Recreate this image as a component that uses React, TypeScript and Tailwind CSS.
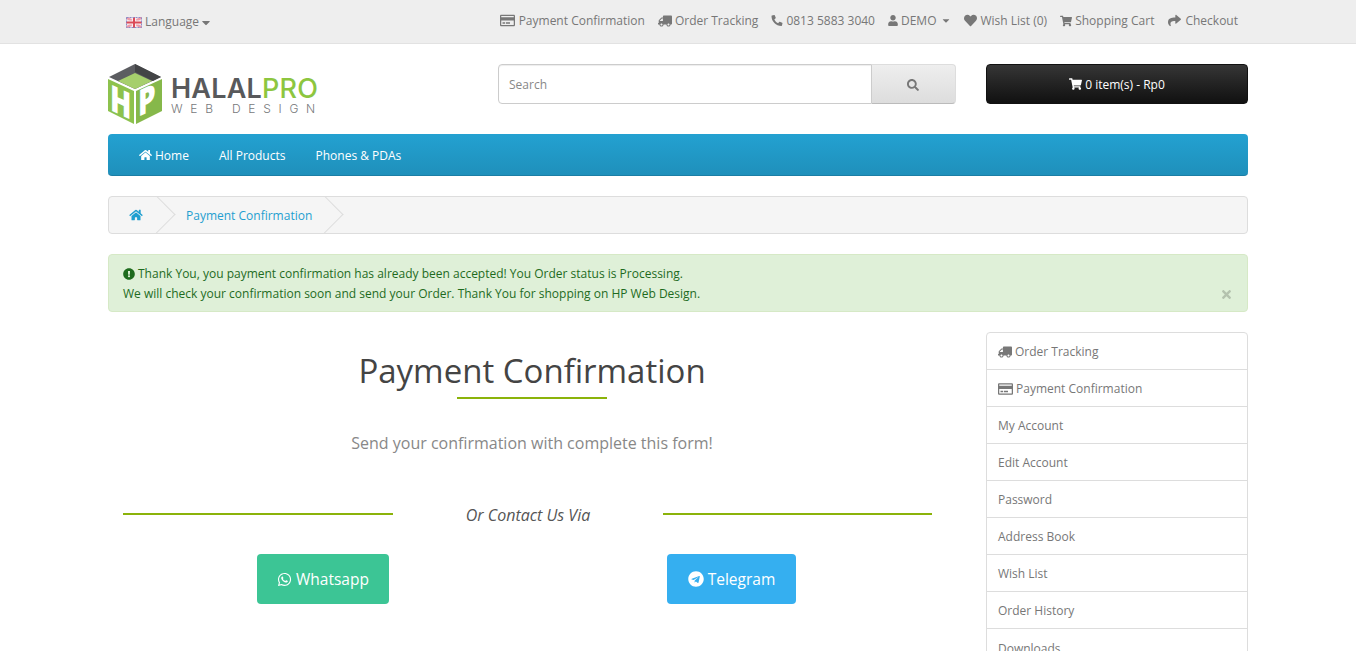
import {
  FaCaretDown,
  FaExclamationCircle,
  FaHeart,
  FaHome,
  FaPhoneAlt,
  FaRegCreditCard,
  FaSearch,
  FaShare,
  FaShoppingCart,
  FaTelegram,
  FaTimes,
  FaTruck,
  FaUser,
  FaWhatsapp,
} from "react-icons/fa";

const sidebarItems = [
  "Order Tracking",
  "Payment Confirmation",
  "My Account",
  "Edit Account",
  "Password",
  "Address Book",
  "Wish List",
  "Order History",
  "Downloads",
];

function Flag() {
  return (
    <svg width="16" height="11" viewBox="0 0 16 11" className="mr-[3px]">
      <rect width="16" height="11" fill="#f0dfe6" />
      <path d="M0 0L16 11M16 0L0 11" stroke="#ee9aa8" strokeWidth="2.5" />
      <path d="M8 0V11M0 5.5H16" stroke="#f8eef0" strokeWidth="4" />
      <path d="M8 0V11M0 5.5H16" stroke="#dc4a58" strokeWidth="2" />
      <rect x="0.5" y="0.5" width="15" height="10" fill="none" stroke="#8a8cc8" strokeDasharray="2 1" />
    </svg>
  );
}

function Logo() {
  return (
    <div className="flex items-center">
      <svg width="54" height="60" viewBox="0 0 54 60">
        <polygon points="27,0 53,13 27,25 1,13" fill="#5c5d61" />
        <polygon points="27,0 53,13 45,17 27,8" fill="#434446" />
        <polygon points="27,9 44,17 27,25 10,17" fill="#a6cf6c" />
        <polygon points="0,15 26,27 26,60 0,47" fill="#8dc24d" />
        <polygon points="54,15 28,27 28,60 54,47" fill="#86b84a" />
        <g transform="translate(2,46) skewY(25) scale(1,1.3)">
          <text fontSize="28" fontWeight="800" fill="#fff" fontFamily="Open Sans">
            H
          </text>
        </g>
        <g transform="translate(30,53) skewY(-25) scale(1,1.3)">
          <text fontSize="28" fontWeight="800" fill="#fff" fontFamily="Open Sans">
            P
          </text>
        </g>
      </svg>
      <div className="ml-[9px] font-['Inter',sans-serif] mt-[3px]">
        <div className="text-[27px] leading-[27px] font-semibold tracking-[0.2px] text-[#58595b]">
          HALAL<span className="text-[#8dc63f] font-medium">PRO</span>
        </div>
        <div className="text-[12px] leading-[14px] tracking-[7.75px] font-light text-[#77787b] whitespace-nowrap">
          WEB DESIGN
        </div>
      </div>
    </div>
  );
}

function TopLink({ icon, children }: { icon: React.ReactNode; children: React.ReactNode }) {
  return (
    <a className="flex items-center gap-[3px] whitespace-nowrap">
      {icon}
      <span>{children}</span>
    </a>
  );
}

export default function App() {
  return (
    <div className="h-[651px] overflow-hidden bg-white font-['Open_Sans',sans-serif] text-[12px] text-[#666]">
      {/* Top bar */}
      <div className="h-[44px] bg-[#eee] border-b border-[#e2e2e2]">
        <div className="w-[1140px] mx-auto h-full flex items-center justify-between">
          <div className="flex items-center ml-[18px] mt-[1px] text-[#777]">
            <Flag />
            <span>Language</span>
            <FaCaretDown className="w-[12px] h-[13px] ml-[1px]" />
          </div>
          <div className="flex items-center gap-[13px] mr-[10px] text-[#777] -mt-[2px]">
            <TopLink icon={<FaRegCreditCard className="w-[15px] h-[15px] mr-[1px]" />}>Payment Confirmation</TopLink>
            <TopLink icon={<FaTruck className="w-[14px] h-[12px] -scale-x-100" />}>Order Tracking</TopLink>
            <TopLink icon={<FaPhoneAlt className="w-[12px] h-[11px]" />}>0813 5883 3040</TopLink>
            <a className="flex items-center gap-[3px]">
              <FaUser className="w-[10px] h-[11px]" />
              <span>DEMO</span>
              <FaCaretDown className="w-[10px] h-[11px] ml-[2px]" />
            </a>
            <TopLink icon={<FaHeart className="w-[13px] h-[13px]" />}>Wish List (0)</TopLink>
            <TopLink icon={<FaShoppingCart className="w-[12px] h-[12px]" />}>Shopping Cart</TopLink>
            <TopLink icon={<FaShare className="w-[15px] h-[13px]" />}>Checkout</TopLink>
          </div>
        </div>
      </div>

      <div className="w-[1140px] mx-auto">
        {/* Header */}
        <div className="flex items-start mt-[20px] h-[70px]">
          <div className="w-[390px]">
            <Logo />
          </div>
          <div className="flex w-[458px] h-[40px]">
            <input
              placeholder="Search"
              className="flex-1 min-w-0 h-full px-[10px] border border-[#ccc] rounded-l-[4px] text-[12px] text-[#555] placeholder:text-[#888] shadow-[inset_0_1px_1px_rgba(0,0,0,0.075)] outline-none"
            />
            <button className="w-[84px] h-full flex items-center justify-center border border-l-0 border-[#ddd] border-b-[#bbb] rounded-r-[4px] bg-gradient-to-b from-[#eee] to-[#ddd] text-[#777]">
              <FaSearch className="w-[12px] h-[12px] mt-[1px] -ml-[2px]" />
            </button>
          </div>
          <button className="ml-[30px] w-[262px] h-[40px] flex items-center justify-center gap-[3px] rounded-[4px] border border-[#111] bg-gradient-to-b from-[#363636] to-[#111] text-white">
            <FaShoppingCart className="w-[13px] h-[12px]" />
            <span className="translate-y-[1px]">0 item(s) - Rp0</span>
          </button>
        </div>

        {/* Nav */}
        <nav className="h-[42px] flex items-center rounded-[4px] bg-gradient-to-b from-[#23a1d1] to-[#1f90bb] border-b border-[#1b7ea5] text-white pl-[31px] pt-[2px] gap-[30px]">
          <a className="flex items-center gap-[3px]">
            <FaHome className="w-[13px] h-[12px] -mt-[2px]" />
            Home
          </a>
          <a>All Products</a>
          <a>Phones &amp; PDAs</a>
        </nav>

        {/* Breadcrumb */}
        <div className="mt-[20px] h-[38px] flex items-center rounded-[4px] border border-[#ddd] bg-[#f5f5f5] text-[#1f9fd0] overflow-hidden">
          <a className="relative w-[52px] h-full flex items-center justify-center pl-[2px]">
            <FaHome className="w-[14px] h-[12px] -mt-[1px]" />
            <span className="absolute -right-[9px] top-[4px] w-[27px] h-[27px] rotate-45 border-t border-r border-[#ddd]" />
          </a>
          <a className="relative w-[168px] h-full flex items-center pl-[25px] pt-[2px]">
            Payment Confirmation
            <span className="absolute -right-[9px] top-[4px] w-[27px] h-[27px] rotate-45 border-t border-r border-[#ddd]" />
          </a>
        </div>

        {/* Alert */}
        <div className="relative mt-[20px] h-[58px] rounded-[4px] border border-[#d6e9c6] bg-[#dff0d8] text-[#1e6b1e] px-[14px] pt-[9px] leading-[20px]">
          <div className="flex items-center gap-[3px]">
            <FaExclamationCircle className="w-[12px] h-[12px]" />
            <span>Thank You, you payment confirmation has already been accepted! You Order status is Processing.</span>
          </div>
          <div>We will check your confirmation soon and send your Order. Thank You for shopping on HP Web Design.</div>
          <FaTimes className="absolute right-[15px] top-[33px] w-[11px] h-[13px] text-[#b4c2ae]" />
        </div>

        {/* Main */}
        <div className="flex mt-[20px]">
          <div className="w-[848px] shrink-0">
            <h1 className="mt-[15px] text-center text-[33px] leading-[48px] text-[#444] font-normal">Payment Confirmation</h1>
            <div className="w-[150px] h-[2px] bg-[#8bb30a] mx-auto mt-[2px]" />
            <p className="mt-[32px] text-center text-[16px] leading-[24px] text-[#888]">
              Send your confirmation with complete this form!
            </p>
            <div className="grid grid-cols-[270px_270px_269px] items-center ml-[15px] mt-[47px]">
              <div className="h-[2px] bg-[#8bb30a]" />
              <div className="text-center text-[16px] leading-[24px] italic text-[#555] translate-y-[1px]">Or Contact Us Via</div>
              <div className="h-[2px] bg-[#8bb30a]" />
            </div>
            <div className="flex ml-[149px] mt-[28px] gap-[278px]">
              <a className="w-[132px] h-[50px] flex items-center justify-center gap-[4px] pt-[2px] rounded-[4px] bg-[#3cc595] text-white text-[15.5px] font-medium">
                <FaWhatsapp className="w-[15px] h-[15px] -mt-[2px]" />
                Whatsapp
              </a>
              <a className="w-[129px] h-[50px] flex items-center justify-center gap-[4px] pt-[2px] rounded-[4px] bg-[#35aff0] text-white text-[15.5px] font-medium">
                <FaTelegram className="w-[16px] h-[16px] -mt-[2px]" />
                Telegram
              </a>
            </div>
          </div>

          <aside className="ml-[30px] w-[262px] shrink-0 self-start rounded-[4px] border border-[#ddd] text-[#777]">
            {sidebarItems.map((item, i) => (
              <a key={item} className="flex items-center gap-[3px] h-[37px] px-[11px] pt-[2px] border-b border-[#ddd] last:border-b-0">
                {i === 0 && <FaTruck className="w-[14px] h-[12px] -scale-x-100 -mt-[1px]" />}
                {i === 1 && <FaRegCreditCard className="w-[15px] h-[14px] -mt-[1px]" />}
                {item}
              </a>
            ))}
          </aside>
        </div>
      </div>
    </div>
  );
}
